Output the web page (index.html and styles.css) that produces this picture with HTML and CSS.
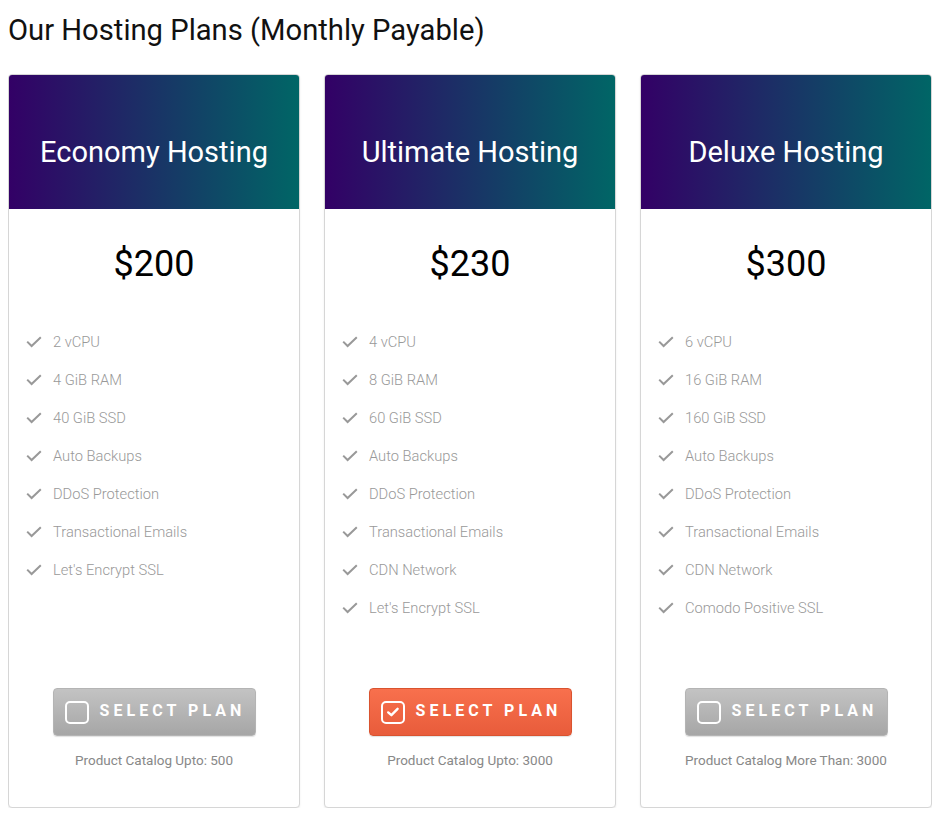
FILE: index.html
```html
<!DOCTYPE html>
<html lang="en">
<head>
<meta charset="utf-8">
<title>Our Hosting Plans</title>
<link rel="stylesheet" href="styles.css">
</head>
<body>
<h2 class="page-title">Our Hosting Plans (Monthly Payable)</h2>
<div class="plans">
  <div class="plan">
    <div class="plan-head">Economy Hosting</div>
    <div class="plan-price">$200</div>
    <ul class="features">
      <li><svg class="tick" viewBox="0 0 16 12"><path d="M1.2 5.6 L5.6 10 L14.8 1.2"/></svg>2 vCPU</li>
      <li><svg class="tick" viewBox="0 0 16 12"><path d="M1.2 5.6 L5.6 10 L14.8 1.2"/></svg>4 GiB RAM</li>
      <li><svg class="tick" viewBox="0 0 16 12"><path d="M1.2 5.6 L5.6 10 L14.8 1.2"/></svg>40 GiB SSD</li>
      <li><svg class="tick" viewBox="0 0 16 12"><path d="M1.2 5.6 L5.6 10 L14.8 1.2"/></svg>Auto Backups</li>
      <li><svg class="tick" viewBox="0 0 16 12"><path d="M1.2 5.6 L5.6 10 L14.8 1.2"/></svg>DDoS Protection</li>
      <li><svg class="tick" viewBox="0 0 16 12"><path d="M1.2 5.6 L5.6 10 L14.8 1.2"/></svg>Transactional Emails</li>
      <li><svg class="tick" viewBox="0 0 16 12"><path d="M1.2 5.6 L5.6 10 L14.8 1.2"/></svg>Let's Encrypt SSL</li>
    </ul>
    <div class="plan-foot">
      <button class="select-btn"><span class="box"></span>SELECT PLAN</button>
      <div class="catalog">Product Catalog Upto: 500</div>
    </div>
  </div>
  <div class="plan">
    <div class="plan-head">Ultimate Hosting</div>
    <div class="plan-price">$230</div>
    <ul class="features">
      <li><svg class="tick" viewBox="0 0 16 12"><path d="M1.2 5.6 L5.6 10 L14.8 1.2"/></svg>4 vCPU</li>
      <li><svg class="tick" viewBox="0 0 16 12"><path d="M1.2 5.6 L5.6 10 L14.8 1.2"/></svg>8 GiB RAM</li>
      <li><svg class="tick" viewBox="0 0 16 12"><path d="M1.2 5.6 L5.6 10 L14.8 1.2"/></svg>60 GiB SSD</li>
      <li><svg class="tick" viewBox="0 0 16 12"><path d="M1.2 5.6 L5.6 10 L14.8 1.2"/></svg>Auto Backups</li>
      <li><svg class="tick" viewBox="0 0 16 12"><path d="M1.2 5.6 L5.6 10 L14.8 1.2"/></svg>DDoS Protection</li>
      <li><svg class="tick" viewBox="0 0 16 12"><path d="M1.2 5.6 L5.6 10 L14.8 1.2"/></svg>Transactional Emails</li>
      <li><svg class="tick" viewBox="0 0 16 12"><path d="M1.2 5.6 L5.6 10 L14.8 1.2"/></svg>CDN Network</li>
      <li><svg class="tick" viewBox="0 0 16 12"><path d="M1.2 5.6 L5.6 10 L14.8 1.2"/></svg>Let's Encrypt SSL</li>
    </ul>
    <div class="plan-foot">
      <button class="select-btn active"><span class="box"><svg viewBox="0 0 14 12"><path d="M2.2 6.4 L5.4 9.2 L11.6 2.8"/></svg></span>SELECT PLAN</button>
      <div class="catalog">Product Catalog Upto: 3000</div>
    </div>
  </div>
  <div class="plan">
    <div class="plan-head">Deluxe Hosting</div>
    <div class="plan-price">$300</div>
    <ul class="features">
      <li><svg class="tick" viewBox="0 0 16 12"><path d="M1.2 5.6 L5.6 10 L14.8 1.2"/></svg>6 vCPU</li>
      <li><svg class="tick" viewBox="0 0 16 12"><path d="M1.2 5.6 L5.6 10 L14.8 1.2"/></svg>16 GiB RAM</li>
      <li><svg class="tick" viewBox="0 0 16 12"><path d="M1.2 5.6 L5.6 10 L14.8 1.2"/></svg>160 GiB SSD</li>
      <li><svg class="tick" viewBox="0 0 16 12"><path d="M1.2 5.6 L5.6 10 L14.8 1.2"/></svg>Auto Backups</li>
      <li><svg class="tick" viewBox="0 0 16 12"><path d="M1.2 5.6 L5.6 10 L14.8 1.2"/></svg>DDoS Protection</li>
      <li><svg class="tick" viewBox="0 0 16 12"><path d="M1.2 5.6 L5.6 10 L14.8 1.2"/></svg>Transactional Emails</li>
      <li><svg class="tick" viewBox="0 0 16 12"><path d="M1.2 5.6 L5.6 10 L14.8 1.2"/></svg>CDN Network</li>
      <li><svg class="tick" viewBox="0 0 16 12"><path d="M1.2 5.6 L5.6 10 L14.8 1.2"/></svg>Comodo Positive SSL</li>
    </ul>
    <div class="plan-foot">
      <button class="select-btn"><span class="box"></span>SELECT PLAN</button>
      <div class="catalog">Product Catalog More Than: 3000</div>
    </div>
  </div>
</div>
</body>
</html>
```
FILE: styles.css
```css
* { box-sizing: border-box; }
body {
  margin: 8px;
  font-family: Roboto, "Liberation Sans", Arial, sans-serif;
  background: #fff;
  color: #000;
}
.page-title {
  margin: 0;
  padding-top: 0;
  font-size: 29.2px;
  font-weight: 400;
  line-height: 44px;
  color: #111;
  height: 66px;
}
.plans {
  display: grid;
  grid-template-columns: repeat(3, 1fr);
  gap: 24px;
}
.plan {
  display: flex;
  flex-direction: column;
  border: 1px solid #d6d6d6;
  border-radius: 4px;
  box-shadow: 0 1px 2px rgba(0,0,0,0.08);
  overflow: hidden;
  background: #fff;
}
.plan-head {
  height: 135px;
  display: flex;
  align-items: center;
  justify-content: center;
  padding-top: 20px;
  background: linear-gradient(to right, #330066, #006666);
  color: #fff;
  font-size: 29px;
  font-weight: 400;
  margin: -1px -1px 0;
}
.plan-price {
  padding-top: 33px;
  line-height: 44px;
  font-size: 36px;
  text-align: center;
  color: #000;
}
.features {
  list-style: none;
  margin: 37px 0 0;
  padding: 0 0 61px 17px;
}
.features li {
  display: flex;
  align-items: center;
  height: 38px;
  font-size: 14.7px;
  font-weight: 300;
  color: #999;
}
.tick {
  width: 16px;
  height: 12px;
  margin-right: 11px;
  fill: none;
  stroke: #999;
  stroke-width: 2;
}
.plan-foot {
  margin-top: auto;
  display: flex;
  flex-direction: column;
  align-items: center;
  padding-bottom: 37px;
}
.select-btn {
  width: 203px;
  height: 48px;
  display: flex;
  align-items: center;
  padding: 0 0 3px 11px;
  border: 1px solid #b4b4b4;
  border-radius: 4px;
  background: linear-gradient(to bottom, #c3c3c3, #a6a6a6);
  color: #fff;
  font-family: Roboto, "Liberation Sans", Arial, sans-serif;
  font-size: 16px;
  font-weight: 700;
  letter-spacing: 4.05px;
  box-shadow: 0 1px 1px rgba(0,0,0,0.12);
  cursor: pointer;
}
.select-btn.active {
  border-color: #d9532f;
  background: linear-gradient(to bottom, #f8704d, #e85c3b);
}
.box {
  width: 24px;
  height: 23px;
  border: 2px solid #fff;
  border-radius: 5px;
  margin: 3px 11px 0 0;
  display: flex;
  align-items: center;
  justify-content: center;
  flex: none;
}
.box svg {
  width: 14px;
  height: 12px;
  fill: none;
  stroke: #fff;
  stroke-width: 2.4;
  stroke-linecap: round;
  stroke-linejoin: round;
}
.catalog {
  margin-top: 14px;
  line-height: 20px;
  font-size: 13.5px;
  color: #888;
}
```
